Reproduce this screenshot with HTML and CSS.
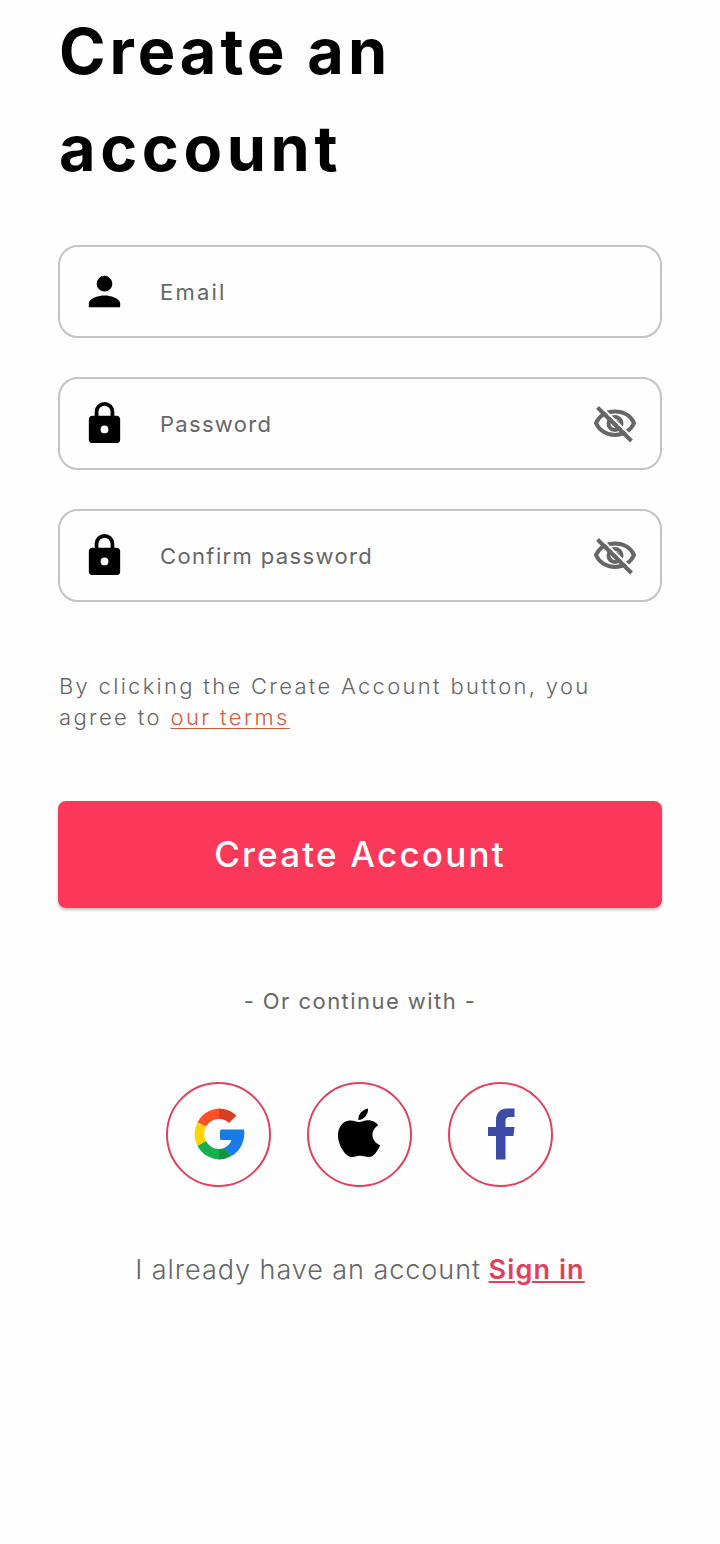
FILE: index.html
```
<!DOCTYPE html>
<html lang="en">
<head>
<meta charset="utf-8">
<title>Create an account</title>
<link rel="stylesheet" href="styles.css">
</head>
<body>
<main class="page">
  <h1 class="title"><span class="title-first">Create an</span><br><span class="title-second">account</span></h1>
  <form class="form">
    <div class="field">
      <svg class="field-icon" viewBox="0 0 24 24"><path d="M12 12a4 4 0 1 0 0-8 4 4 0 0 0 0 8zm0 2c-2.670 0-8 1.340-8 4v2h16v-2c0-2.660-5.330-4-8-4z"/></svg>
      <span class="label label-email">Email</span>
    </div>
    <div class="field">
      <svg class="field-icon" viewBox="0 0 24 24"><path d="M18 8h-1V6A5 5 0 0 0 7 6v2H6a2 2 0 0 0-2 2v10a2 2 0 0 0 2 2h12a2 2 0 0 0 2-2V10a2 2 0 0 0-2-2zm-6 9a2 2 0 1 1 0-4 2 2 0 0 1 0 4zm3.100-9H8.900V6a3.100 3.100 0 0 1 6.200 0z"/></svg>
      <span class="label label-password">Password</span>
      <svg class="eye" viewBox="0 0 44 40"><path class="eye-line" d="M3 19C6 12 13 7.500 22 7.500s16 4.500 19 11.500C38 26 31 31 22 31S6 26 3 19z"/><circle class="eye-line" cx="22" cy="19.500" r="6.500"/><path class="eye-dot" d="M22 15.500a4.500 4.500 0 0 1 4.500 4.500l-3 1.500-3-3z"/><path class="eye-gap" d="M7 1.500l34 33.500"/><path class="eye-line" d="M4.500 3.500l34 33.500"/></svg>
    </div>
    <div class="field">
      <svg class="field-icon" viewBox="0 0 24 24"><path d="M18 8h-1V6A5 5 0 0 0 7 6v2H6a2 2 0 0 0-2 2v10a2 2 0 0 0 2 2h12a2 2 0 0 0 2-2V10a2 2 0 0 0-2-2zm-6 9a2 2 0 1 1 0-4 2 2 0 0 1 0 4zm3.100-9H8.900V6a3.100 3.100 0 0 1 6.200 0z"/></svg>
      <span class="label label-confirm">Confirm password</span>
      <svg class="eye" viewBox="0 0 44 40"><path class="eye-line" d="M3 19C6 12 13 7.500 22 7.500s16 4.500 19 11.500C38 26 31 31 22 31S6 26 3 19z"/><circle class="eye-line" cx="22" cy="19.500" r="6.500"/><path class="eye-dot" d="M22 15.500a4.500 4.500 0 0 1 4.500 4.500l-3 1.500-3-3z"/><path class="eye-gap" d="M7 1.500l34 33.500"/><path class="eye-line" d="M4.500 3.500l34 33.500"/></svg>
    </div>
  </form>
  <p class="terms"><span class="terms-first">By clicking the Create Account button, you</span><br><span class="terms-second">agree to <a class="terms-link">our terms</a></span></p>
  <button class="submit" type="button">Create Account</button>
  <p class="divider">- Or continue with -</p>
  <div class="socials">
    <a class="social"><svg viewBox="0 0 52 52">
      <path fill="#ff5027" d="M4.500 14.500A25.500 25.500 0 0 1 26 .5V11a15.500 15.500 0 0 0-13 7.500z"/>
      <path fill="#d93f21" d="M26 .5a25.500 25.500 0 0 1 17.500 7L36 15a15 15 0 0 0-10-4z"/>
      <path fill="#ffd500" d="M4.500 14.500a25.500 25.500 0 0 0 0 23.500l8.500-5a15 15 0 0 1 0-14.500z"/>
      <path fill="#16b04a" d="M4.500 38A25.500 25.500 0 0 0 26 51.500V41a15 15 0 0 1-13-8z"/>
      <path fill="#12953f" d="M26 51.500a25.500 25.500 0 0 0 12.500-3.500L31.500 40a15 15 0 0 1-5.500 1z"/>
      <path fill="#187be6" d="M28.500 21.500H51a26 26 0 0 1-12.500 26.500l-7.500-8a14 14 0 0 0 7.500-8H28.500a1.500 1.500 0 0 1-1.500-1.500V23a1.500 1.500 0 0 1 1.500-1.500z"/>
    </svg></a>
    <a class="social"><svg viewBox="0 0 52 52"><path d="M34 .5c.8 5.500-4 11.500-9.500 11.500C23.700 6.500 28.500 1.500 34 .5zM25 14c2.500 0 5-1.800 9-1.800 4.500 0 8.300 2.300 10.200 5-8.500 5-7.200 16.500 2 20C44 42.500 39.500 49 35 49c-3.500 0-4.500-1.300-8.800-1.300C22 47.700 20.800 49 17.500 49 11.500 49 4 37 4 27.500c0-9.300 5.700-15 12.500-15 3.800 0 6 1.500 8.500 1.500z"/></svg></a>
    <a class="social"><svg viewBox="0 0 52 52"><path fill="#3c4ba5" d="M39.500.5h-7C25 .5 21 5 21 12.500V19h-8v9h8v23.500h9.500V28h8l1-9h-9v-5.500c0-3.500 1.500-4.500 4.500-4.500h4.500z"/></svg></a>
  </div>
  <p class="signin"><span class="signin-text">I already have an account</span> <a class="signin-link">Sign in</a></p>
</main>
</body>
</html>
```
FILE: styles.css
```
body { margin: 0; background: #fefefe; font-family: Inter, "Open Sans", sans-serif; color: #666; }
.page { box-sizing: border-box; height: 1544px; padding: 3px 58px 0; overflow: hidden; }
.title { margin: 0; padding-left: 1px; color: #000; font-size: 63px; font-weight: 700; line-height: 97px; white-space: nowrap; }
.title-first { letter-spacing: 4px; }
.title-second { letter-spacing: 4.600px; }
.form { display: flex; flex-direction: column; gap: 39px; margin-top: 48.400px; }
.field { box-sizing: border-box; height: 93px; border: 2px solid #c4c4c4; border-radius: 20px; display: flex; align-items: center; padding: 0 23px 0 21px; }
.field-icon { width: 47px; height: 47px; margin-right: 32px; }
.label { font-size: 22px; white-space: nowrap; }
.label-email { letter-spacing: 2.200px; }
.label-password { letter-spacing: 1.300px; }
.label-confirm { letter-spacing: 1.370px; }
.eye { width: 44px; height: 40px; margin-left: auto; }
.eye-line { fill: none; stroke: #666; stroke-width: 4; }
.eye-dot { fill: #666; }
.eye-gap { fill: none; stroke: #fefefe; stroke-width: 2; }
.terms { margin: 68.600px 0 0; padding-left: 1px; font-size: 22px; font-weight: 300; line-height: 31px; white-space: nowrap; }
.terms-first { letter-spacing: 2.300px; }
.terms-second { letter-spacing: 2.370px; }
.terms-link { color: #d65a3c; text-decoration: underline #d65a3c; text-decoration-thickness: 1px; text-underline-offset: 3px; }
.submit { display: block; width: 100%; height: 107px; margin-top: 68px; padding: 0; border: 0; border-radius: 8px; background: #fa3859; color: #fff; font: 500 35px Inter, sans-serif; letter-spacing: 2.200px; box-shadow: 0 2px 3px rgba(0,0,0,.25); }
.divider { margin: 78px 0 0; text-align: center; font-size: 22px; line-height: 30px; letter-spacing: 1.450px; }
.socials { display: flex; justify-content: center; gap: 36px; margin-top: 66px; padding-right: 1px; }
.social { box-sizing: border-box; width: 105px; height: 105px; border: 2px solid #e0415d; border-radius: 50%; display: flex; align-items: center; justify-content: center; }
.social svg { width: 52px; height: 52px; }
.signin { margin: 63px 0 0; text-align: center; font-size: 27px; line-height: 40px; white-space: nowrap; }
.signin-text { font-weight: 300; letter-spacing: .950px; }
.signin-link { color: #e0415d; font-weight: 600; letter-spacing: 1.100px; text-decoration: underline; text-decoration-thickness: 2px; text-underline-offset: 2px; }
```
